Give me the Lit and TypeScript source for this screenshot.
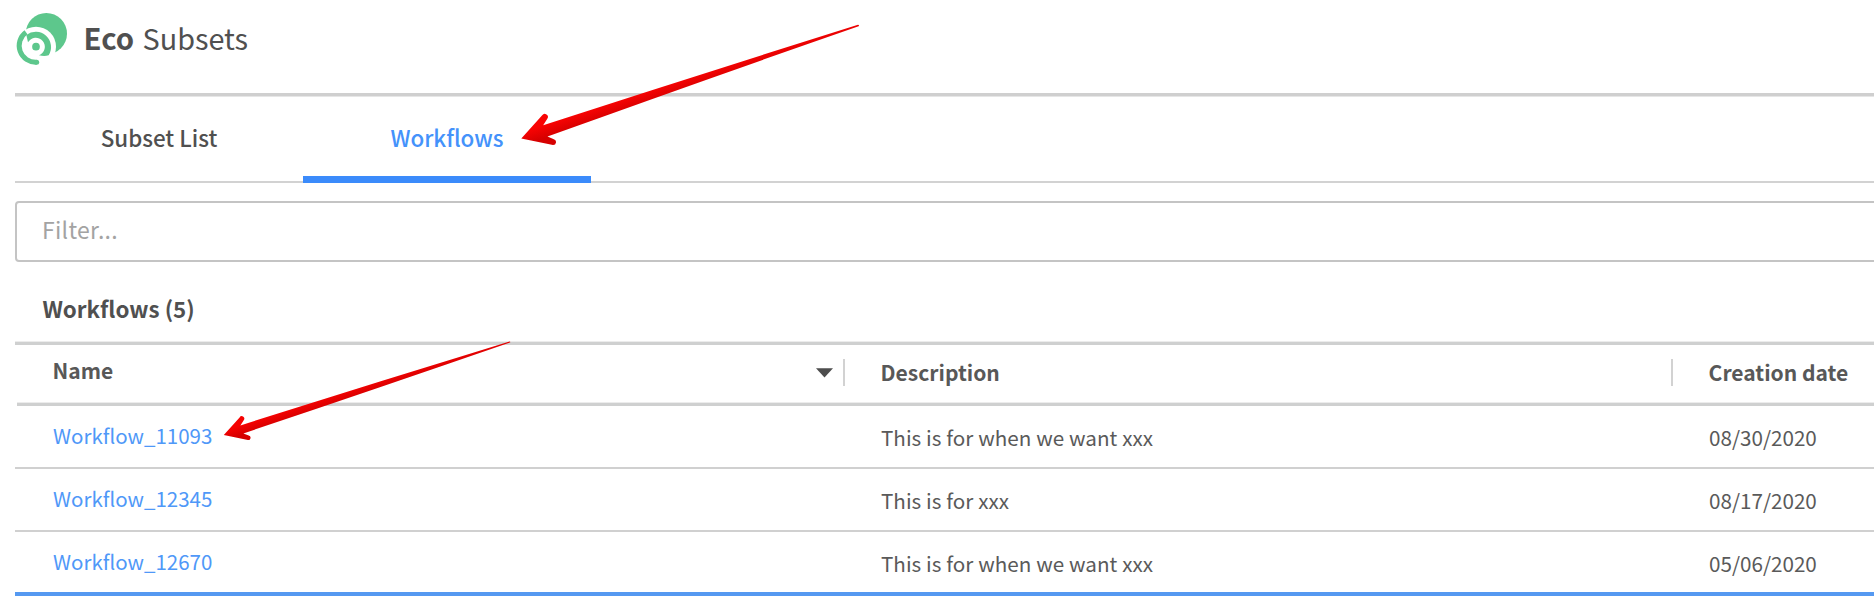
import { LitElement, html, css } from "lit";
import { customElement, property, state } from "lit/decorators.js";

interface Workflow {
  name: string;
  description: string;
  created: string;
}

@customElement("eco-logo")
class EcoLogo extends LitElement {
  static styles = css`
    :host { display: block; width: 56px; height: 58px; }
    svg { display: block; }
    .leaf { fill: #5dc78c; }
    .gap { fill: #fff; }
    .tail { fill: none; stroke: #5dc78c; stroke-width: 15; }
  `;
  render() {
    return html`<svg width="56" height="58" viewBox="0 0 168 174">
      <circle class="leaf" cx="97" cy="71" r="62" />
      <circle class="gap" cx="66" cy="110" r="60" />
      <path class="tail" d="M36 67 A49.5 49.5 0 0 0 68 156.5" />
      <circle class="leaf" cx="68" cy="156.5" r="7.5" />
      <path class="leaf" d="M37 75 A46 46 0 0 1 104 136 Q90 140 75 135.5 A27 27 0 1 0 42 97 Z" />
      <circle class="leaf" cx="66" cy="110" r="11.5" />
    </svg>`;
  }
}

@customElement("callout-arrows")
class CalloutArrows extends LitElement {
  static styles = css`
    :host { display: block; pointer-events: none; }
    svg { display: block; }
  `;
  render() {
    return html`<svg width="1874" height="596" viewBox="0 0 1874 596">
      <defs>
        <linearGradient id="a" gradientUnits="userSpaceOnUse" x1="556" y1="121" x2="560" y2="133">
          <stop offset="0" stop-color="#f80303" /><stop offset="1" stop-color="#d60000" />
        </linearGradient>
        <linearGradient id="b" gradientUnits="userSpaceOnUse" x1="251" y1="422" x2="254" y2="431">
          <stop offset="0" stop-color="#f50202" /><stop offset="1" stop-color="#d60000" />
        </linearGradient>
      </defs>
      <path fill="url(#a)" d="M521.3 138.6 L542.2 115.2 A3 3 0 0 1 547.3 118.7 L543.2 125.2 Q700 74.5 858 24.8 Q859.6 25 858.6 26.3 Q690 85 547.5 136.6 L553.8 139.2 A3 3 0 0 1 553 145.1 Z" />
      <path fill="url(#b)" d="M223.8 435 L239.6 417.4 A2.4 2.4 0 0 1 243.9 420 L240.4 425.4 Q375 382.5 509.6 341.4 Q510.8 341.6 510 342.5 Q370 391 243.4 433.4 L248.7 435.6 A2.2 2.2 0 0 1 247.9 440 Z" />
    </svg>`;
  }
}

@customElement("workflow-table")
class WorkflowTable extends LitElement {
  static styles = css`
    :host { display: block; color: #5a5a5a; }
    .row {
      display: grid;
      grid-template-columns: 830px 828px 1fr;
      box-sizing: border-box;
      height: 63px;
      line-height: 63px;
      font-size: 20.65px;
      border-bottom: 2px solid #d0d0d0;
      white-space: nowrap;
    }
    .row.last { height: 64px; border-bottom: 4px solid #5599f1; }
    .cell { padding-left: 36px; word-spacing: 0.25px; height: 59px; }
    .link { padding-left: 38px; line-height: 59px; color: #4f98f8; font-size: 20.5px; }
    .head {
      height: 61px;
      line-height: 55px;
      font-size: 21.05px;
      font-weight: 700;
      color: #585858;
      border: 0;
    }
    .rule { height: 3px; margin-left: 2px; margin-top: -3px; background: #cfd0d0; box-shadow: 0 -1px #ececec; }
    .title { display: flex; box-sizing: border-box; height: 57px; padding-left: 35.6px; }
    .sortable { padding-left: 37.5px; line-height: 51px; }
    .label { flex: 1; }
    .caret { margin: 23px 10.5px 0 0; }
    .divider { width: 2px; height: 27px; margin-top: 14px; background: #d2d2d2; }
  `;
  @property({ attribute: false }) rows: Workflow[] = [];

  render() {
    return html`
      <div class="row head">
        <div class="title sortable">
          <span class="label">Name</span>
          <svg class="caret" width="17" height="10" viewBox="0 0 17 10"><path fill="#4d4d4d" d="M0 .3H17L8.5 9.5Z" /></svg>
          <span class="divider"></span>
        </div>
        <div class="title"><span class="label">Description</span><span class="divider"></span></div>
        <div class="title">Creation date</div>
      </div>
      <div class="rule"></div>
      ${this.rows.map(
        (r, i) => html`<div class="row ${i === this.rows.length - 1 ? "last" : ""}">
          <div class="cell link">${r.name}</div>
          <div class="cell">${r.description}</div>
          <div class="cell">${r.created}</div>
        </div>`
      )}
    `;
  }
}

@customElement("app-root")
class AppRoot extends LitElement {
  static styles = css`
    :host {
      display: block;
      position: relative;
      width: 1874px;
      height: 596px;
      overflow: hidden;
      background: #fff;
      color: #505050;
      font-family: "Noto Sans CJK SC", sans-serif;
    }
    .page { margin-left: 15px; }
    .header { display: flex; height: 93px; box-sizing: border-box; padding: 10px 0 0; }
    .logo { margin-left: -1px; }
    .brand { margin: 7px 0 0 13.5px; line-height: 41px; font-size: 28.8px; word-spacing: 2px; white-space: nowrap; }
    .strong { font-weight: 700; font-size: 29.3px; }
    .rule { height: 3px; background: #cfcfcf; }
    .rule.top { box-shadow: 0 1px #e6e6e6; }
    .tabs { display: flex; margin-top: 1px; height: 84px; border-bottom: 2px solid #d2d2d2; }
    .tab {
      width: 288px;
      height: 86px;
      box-sizing: border-box;
      text-align: center;
      font-size: 22.4px;
      font-weight: 500;
      line-height: 80px;
    }
    .tab.active { color: #4492fb; border-bottom: 7px solid #3b8bfb; }
    .filter {
      margin: 18px -8px 0 0;
      box-sizing: border-box;
      height: 61px;
      padding-left: 25px;
      border: 2px solid #c4c4c4;
      border-radius: 4px;
      font-size: 23px;
      letter-spacing: 0.3px;
      line-height: 52px;
      color: #a3a3a3;
    }
    .heading { height: 80px; box-sizing: border-box; padding: 13px 0 0 27.4px; font-size: 22.35px; font-weight: 700; line-height: 66px; }
    .rule.table { box-shadow: 0 -1px #ececec; background: #cfd0d0; }
    .arrows { position: absolute; left: 0; top: 0; }
  `;

  @state() active = "Workflows";
  rows: Workflow[] = [
    { name: "Workflow_11093", description: "This is for when we want xxx", created: "08/30/2020" },
    { name: "Workflow_12345", description: "This is for xxx", created: "08/17/2020" },
    { name: "Workflow_12670", description: "This is for when we want xxx", created: "05/06/2020" },
  ];

  render() {
    return html`
      <div class="page">
        <div class="header">
          <eco-logo class="logo"></eco-logo>
          <div class="brand"><span class="strong">Eco</span> Subsets</div>
        </div>
        <div class="rule top"></div>
        <div class="tabs">
          ${["Subset List", "Workflows"].map(
            (t) => html`<div class="tab ${t === this.active ? "active" : ""}" @click=${() => (this.active = t)}>${t}</div>`
          )}
        </div>
        <div class="filter">Filter...</div>
        <div class="heading">Workflows (5)</div>
        <div class="rule table"></div>
        <workflow-table .rows=${this.rows}></workflow-table>
      </div>
      <callout-arrows class="arrows"></callout-arrows>
    `;
  }
}
